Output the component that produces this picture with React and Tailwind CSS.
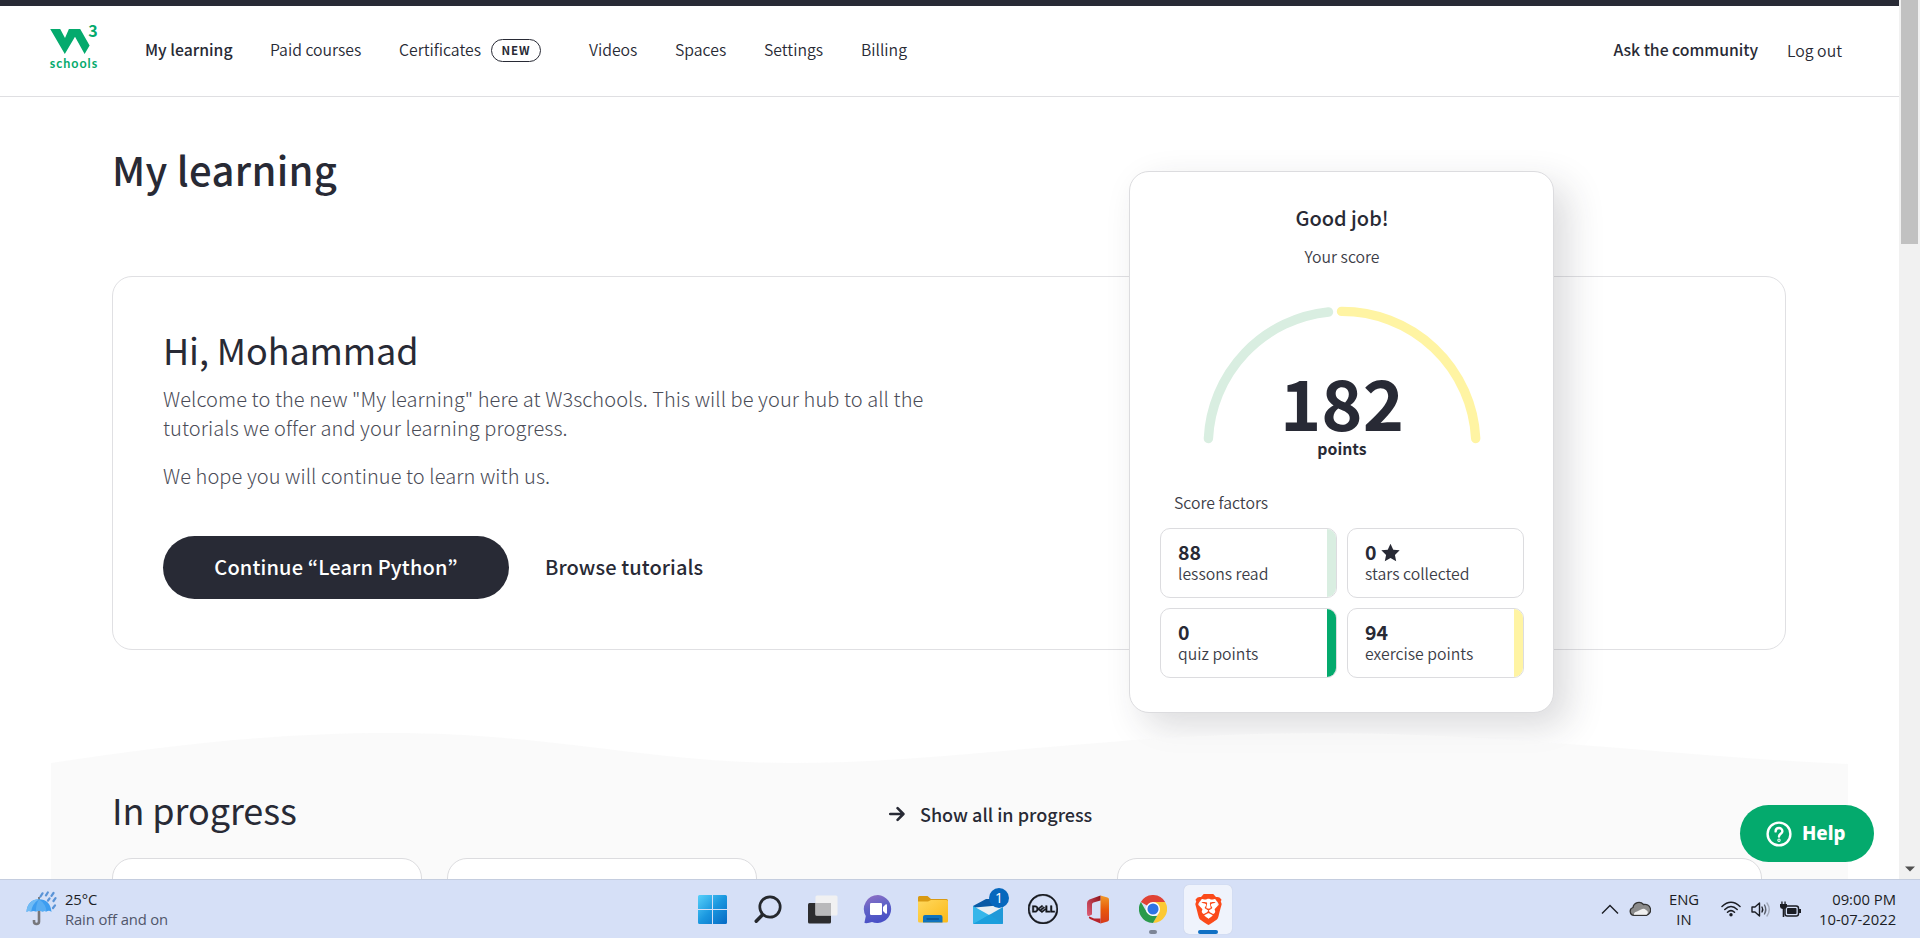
import React from "react";
import { SiBrave, SiDell } from "react-icons/si";

const sans = "font-['Noto_Sans_CJK_KR',sans-serif]";
const system = "font-['Open_Sans',sans-serif]";

function Logo() {
  return (
    <svg width="50" height="46" viewBox="50 24 50 46" className="shrink-0 overflow-visible">
      <path d="M50.2 29H60.2L65 38L68.9 29H80.2L89.6 45.5L84.6 54L75 36.8L64.8 54Z" fill="#04aa6d" />
      <text x="88.2" y="37" fontSize="16" fontWeight="700" fontFamily="Noto Sans CJK KR, sans-serif" fill="#04aa6d">3</text>
      <text x="49.7" y="67.7" fontSize="12.5" fontWeight="700" textLength="47.500" lengthAdjust="spacing" fontFamily="Lato, sans-serif" fill="#04aa6d">schools</text>
    </svg>
  );
}

function Header() {
  return (
    <header className="h-[97px] shrink-0 border-t-[6px] border-b border-t-[#282a35] border-b-[#dfdfe2] flex items-start text-[15.8px] leading-[24px] text-[#282a35] pl-[50px] pr-[57px]">
      <div className="pt-[18px]"><Logo /></div>
      <nav className="flex pt-[32px] pl-[45px] whitespace-nowrap font-[350]">
        <a className="font-medium w-[125px]">My learning</a>
        <a className="w-[129px]">Paid courses</a>
        <a className="w-[190px] flex">
          <span className="w-[92px]">Certificates</span>
          <span className="mt-[1px] h-[23px] w-[50px] rounded-full border-[1.5px] border-[#282a35] text-[11.5px] leading-[20px] font-bold tracking-[1px] text-center">NEW</span>
        </a>
        <a className="w-[86px]">Videos</a>
        <a className="w-[89px]">Spaces</a>
        <a className="w-[97px]">Settings</a>
        <a>Billing</a>
      </nav>
      <div className="ml-auto flex pt-[32px] whitespace-nowrap font-[350]">
        <a className="font-medium mr-[29px] tracking-[-0.04px]">Ask the community</a>
        <a className="pt-[1px]">Log out</a>
      </div>
    </header>
  );
}

function Factor({ value, label, stripe, star }) {
  return (
    <div className="h-[70px] rounded-[10px] border border-[#dcdcdf] overflow-hidden flex justify-between">
      <div className="pt-[12px] pl-[17px] whitespace-nowrap">
        <div className="text-[19.5px] leading-[22px] font-bold flex items-center">
          {value}
          {star && (
            <svg width="19" height="19" viewBox="0 0 24 24" className="ml-[4px]" fill="#282a35">
              <path d="M12 0.8L15.5 8.4L23.6 9.3L17.6 15L19.2 23.2L12 19.1L4.8 23.2L6.4 15L0.4 9.3L8.5 8.4Z" />
            </svg>
          )}
        </div>
        <div className="text-[15.8px] leading-[22px] font-[350] text-[#3c3d47]">{label}</div>
      </div>
      {stripe && <div className={"w-[10px] -my-px -mr-px " + stripe} />}
    </div>
  );
}

function ScoreCard() {
  return (
    <aside className="absolute left-[1016px] top-[-106px] w-[425px] h-[542px] rounded-[20px] border border-[#dcdcdf] bg-white shadow-[14px_14px_36px_rgba(40,42,53,0.17)] pl-[30px] pr-[29px] pt-[32px] text-center text-[#282a35]">
      <h3 className="text-[20px] leading-[28px] font-medium">Good job!</h3>
      <p className="mt-[13px] text-[15.8px] leading-[24px] font-[350] text-[#3c3d47]">Your score</p>
      <div className="relative h-[222px]">
        <svg width="290" height="150" viewBox="1196.5 300 290 150" className="absolute left-[36.500px] top-[31px]" fill="none" strokeWidth="9.4" strokeLinecap="round">
          <path d="M1207.9 438.5A133.8 133.8 0 0 1 1328 312" stroke="#d9eee1" />
          <path d="M1341 311.4A133.8 133.8 0 0 1 1475.2 438.5" stroke="#fff4a3" />
        </svg>
        <div className="absolute inset-x-0 top-[97px] text-[70px] leading-[70px] font-semibold">182</div>
        <div className="absolute inset-x-0 top-[168px] text-[15.800px] leading-[24px] font-bold">points</div>
      </div>
      <div className="text-left">
        <p className="pl-[14px] text-[15.8px] leading-[24px] font-[350] text-[#3c3d47]">Score factors</p>
        <div className="mt-[13px] grid grid-cols-2 gap-x-[10px] gap-y-[10px]">
          <Factor value="88" label="lessons read" stripe="bg-[#d9eee1]" />
          <Factor value="0" label="stars collected" star />
          <Factor value="0" label="quiz points" stripe="bg-[#04aa6d]" />
          <Factor value="94" label="exercise points" stripe="bg-[#fff4a3]" />
        </div>
      </div>
    </aside>
  );
}

function Welcome() {
  return (
    <section className="relative mt-[79px] ml-[112px] w-[1674px] h-[374px] shrink-0 rounded-[20px] border border-[#e0e0e3] pl-[50px] pt-[48px] text-[#282a35]">
      <h2 className="text-[36px] leading-[48px] whitespace-nowrap tracking-[-0.100px]">Hi, Mohammad</h2>
      <p className="mt-[11px] text-[20px] leading-[29px] font-light tracking-[0.08px] whitespace-nowrap text-[#4a4c57]">
        Welcome to the new "My learning" here at W3schools. This will be your hub to all the
        <br />
        tutorials we offer and your learning progress.
      </p>
      <p className="mt-[19px] text-[20px] leading-[29px] font-light tracking-[0.08px] whitespace-nowrap text-[#4a4c57]">We hope you will continue to learn with us.</p>
      <div className="mt-[46px] flex items-center text-[20px] leading-[28px] font-medium whitespace-nowrap">
        <button className="h-[63px] w-[346px] rounded-full bg-[#282a35] pb-[1px] tracking-[0.150px] text-white">Continue “Learn Python”</button>
        <a className="ml-[36px] pb-[1px] tracking-[0.100px]">Browse tutorials</a>
      </div>
      <ScoreCard />
    </section>
  );
}

function Progress() {
  return (
    <section className="relative mt-[83px] ml-[51px] w-[1797px] flex-1 flex flex-col text-[#282a35]">
      <svg width="1797" height="32" viewBox="0 0 1797 32" className="block shrink-0" preserveAspectRatio="none">
        <path d="M0 30C120 12 220 0 340 0C500 0 600 30 740 30C900 30 1060 0 1270 0C1460 0 1640 25 1797 31V32H0Z" fill="#f8f8f8" fillOpacity="0.700" />
      </svg>
      <div className="flex-1 bg-[#f8f8f8]/70 pl-[61px] pt-[20px]">
        <div className="flex h-[48px] items-center">
          <h2 className="w-[777px] text-[36px] leading-[48px] tracking-[-0.100px]">In progress</h2>
          <a className="flex items-center pt-[10px] text-[18px] leading-[26px] font-medium whitespace-nowrap">
            <svg width="16" height="16" viewBox="0 0 16 16" className="mr-[15px]" fill="none" stroke="#282a35" strokeWidth="2.6" strokeLinecap="round" strokeLinejoin="round">
              <path d="M1.2 8H14.2M8.6 2.2L14.4 8L8.6 13.8" />
            </svg>
            Show all in progress
          </a>
        </div>
        <div className="mt-[25px] flex">
          <div className="h-[60px] w-[310px] rounded-t-[20px] border border-[#dcdcdf] bg-white" />
          <div className="ml-[25px] h-[60px] w-[310px] rounded-t-[20px] border border-[#dcdcdf] bg-white" />
          <div className="ml-[360px] h-[60px] w-[645px] rounded-t-[20px] border border-[#dcdcdf] bg-white" />
        </div>
      </div>
      <button className="absolute left-[1689px] top-[72px] flex h-[57px] w-[134px] items-center rounded-full bg-[#04aa6d] pl-[26px] text-[18.800px] font-extrabold text-white font-['Noto_Sans',sans-serif]">
        <svg width="26" height="26" viewBox="0 0 26 26" fill="none" stroke="white" strokeWidth="2.4" strokeLinecap="round">
          <circle cx="13" cy="13" r="11.4" />
          <path d="M9.6 10.4C9.6 5.9 16.4 6 16.4 10.2C16.4 12.8 13 12.8 13 15.6" />
          <circle cx="13" cy="19.2" r="0.5" />
        </svg>
        <span className="ml-[10px]">Help</span>
      </button>
    </section>
  );
}

function Umbrella() {
  return (
    <svg width="31" height="36" viewBox="0 0 31 36">
      <path d="M13 19V30.5Q13 33 10.5 33T8 30.5V29" fill="none" stroke="#77777c" strokeWidth="2.6" />
      <path d="M13 6V9" stroke="#666" strokeWidth="1.6" />
      <path d="M0.5 21C1 12.500 6 8.300 13 8.300S25 12.500 25.500 21Q23 18.800 20.500 20.600Q18.500 19.400 16.500 20.600Q13 19 9.800 20.600Q7.500 19.200 5.200 20.600Q2.600 19 0.500 21Z" fill="#3d9df0" />
      <path d="M0.500 21C1 12.500 6 8.300 13 8.300Q6 13 5.200 20.600Q2.600 19 0.500 21Z" fill="#70bbf5" />
      <path d="M13 8.300Q20 13 20.500 20.600Q18.500 19.400 16.500 20.600Q13 19 9.800 20.600Q10 13 13 8.300Z" fill="#58adf3" />
      <path d="M14.500 5.500L16.500 2.300M20 4.300L21.800 1.500M25.500 4.800L27.500 2M22 9.500L23.500 7.500M27.500 10L29.500 7.200M27 17L29 14.300" stroke="#5a93d6" strokeWidth="2.200" strokeLinecap="round" />
    </svg>
  );
}

function WindowsIcon() {
  return (
    <svg width="29" height="29" viewBox="0 0 29 29">
      <defs>
        <linearGradient id="win" x1="0" y1="0" x2="1" y2="1" gradientUnits="objectBoundingBox">
          <stop offset="0" stopColor="#57d0fa" />
          <stop offset="0.5" stopColor="#1a97df" />
          <stop offset="1" stopColor="#0569c4" />
        </linearGradient>
      </defs>
      <path d="M1.500 0H14V14H0V1.500Q0 0 1.500 0ZM15 0H27.500Q29 0 29 1.500V14H15ZM0 15H14V29H1.500Q0 29 0 27.500ZM15 15H29V27.500Q29 29 27.500 29H15Z" fill="url(#win)" />
    </svg>
  );
}

function SearchIcon() {
  return (
    <svg width="28" height="29" viewBox="0 0 28 29" fill="none" stroke="#25282d" strokeLinecap="round">
      <circle cx="16" cy="12" r="10.200" strokeWidth="2.700" />
      <path d="M8.300 20L2.200 26.300" strokeWidth="3.400" />
    </svg>
  );
}

function TaskViewIcon() {
  return (
    <svg width="30" height="29" viewBox="0 0 30 29">
      <rect x="0" y="8" width="23" height="20.500" rx="1.500" fill="#2d2d2f" />
      <rect x="7.500" y="0.500" width="22" height="20" rx="1.500" fill="#f1f1f2" />
      <rect x="7.500" y="8" width="15.500" height="12.500" fill="#b9b9bb" />
    </svg>
  );
}

function ChatIcon() {
  return (
    <svg width="30" height="30" viewBox="0 0 30 30">
      <defs>
        <linearGradient id="chat" x1="0" y1="0" x2="0.300" y2="1">
          <stop offset="0" stopColor="#9571c4" />
          <stop offset="0.500" stopColor="#6163c7" />
          <stop offset="1" stopColor="#4950c6" />
        </linearGradient>
      </defs>
      <path d="M15 1A14 14 0 1 1 9 28Q5 29.500 1.800 29Q1.200 28.500 1.700 27.500L2.800 22A14 14 0 0 1 15 1Z" fill="url(#chat)" />
      <rect x="7" y="9" width="12" height="12" rx="1.300" fill="white" />
      <path d="M20 13L22.500 10.500Q24 9.500 24 11.500V18.500Q24 20.500 22.500 19.500L20 17Z" fill="white" />
    </svg>
  );
}

function FolderIcon() {
  return (
    <svg width="30" height="27" viewBox="0 0 30 27">
      <defs>
        <linearGradient id="folder" x1="0" y1="0" x2="1" y2="1">
          <stop offset="0" stopColor="#ffd85e" />
          <stop offset="1" stopColor="#fbb917" />
        </linearGradient>
      </defs>
      <path d="M0 1.500Q0 0 1.500 0H9.500L13 3H28.500Q30 3 30 4.500V8H0Z" fill="#d99a13" />
      <path d="M0 5.500H10L13 4H28.500Q30 4 30 5.500V25Q30 26.500 28.500 26.500H1.500Q0 26.500 0 25Z" fill="url(#folder)" />
      <path d="M5 26.500V21Q5 19 7 19H22.500Q24.500 19 24.500 21V26.500Z" fill="#0f73bd" />
      <path d="M9 23H20.500" stroke="#0a4f8c" strokeWidth="1.300" strokeLinecap="round" />
    </svg>
  );
}

function MailIcon() {
  return (
    <div className="relative h-[26px] w-[30px] mt-[3px]">
      <svg width="30" height="26" viewBox="0 0 30 26">
        <path d="M0 8L13 1H30V14H0Z" fill="#0a5aa5" />
        <path d="M2 9.500L30 7V14L15 20Z" fill="#e9eef3" />
        <path d="M0 8L17 17.500L30 26H0.800Q0 26 0 25Z" fill="#35b6ea" />
        <path d="M30 9V25Q30 26 29 26H1L17 16.500Z" fill="#2099d8" />
        <path d="M0 26L17 16.500L30 26Z" fill="#1b9fdd" />
      </svg>
      <span className="absolute left-[16px] top-[-10px] h-[20px] w-[20px] rounded-full bg-[#0667bd] text-center text-[14px] leading-[20px] text-white">1</span>
    </div>
  );
}

function OfficeIcon() {
  return (
    <svg width="24" height="29" viewBox="0 0 24 29">
      <defs>
        <linearGradient id="offR" x1="0" y1="0" x2="0" y2="1">
          <stop offset="0" stopColor="#f09a2a" />
          <stop offset="0.500" stopColor="#e8590c" />
          <stop offset="1" stopColor="#d63a1c" />
        </linearGradient>
        <linearGradient id="offL" x1="1" y1="0" x2="0" y2="1">
          <stop offset="0" stopColor="#8e1218" />
          <stop offset="1" stopColor="#e0607a" />
        </linearGradient>
      </defs>
      <path d="M14.500 0.500L21.500 2.500Q23 3 23 4.500V24.500Q23 26 21.500 26.500L14.500 28.500Z" fill="url(#offR)" />
      <path d="M14.500 0.500L3.500 4.500Q1 5.500 1 8V18.500Q1 22 3.500 20.800L6 19.500V9.500Q6 8 7.500 7.500L14.500 5.500Z" fill="url(#offL)" />
      <path d="M3.500 21.500L8 23.500H14.500V28.500L4 24Q2 22.500 3.500 21.500Z" fill="#b8242b" />
    </svg>
  );
}

function ChromeIcon() {
  return (
    <svg width="28" height="28" viewBox="0 0 48 48">
      <path d="M24 24L3.200 12A24 24 0 0 1 44.800 12Z" fill="#e04335" />
      <path d="M24 12H44.800A24 24 0 0 1 24 48L34.400 30Z" fill="#fcc934" />
      <path d="M3.200 12L13.600 30L24 36H31L24 48A24 24 0 0 1 3.200 12Z" fill="#2a9a4b" />
      <circle cx="24" cy="24" r="12" fill="white" />
      <circle cx="24" cy="24" r="9.500" fill="#2f74e4" />
    </svg>
  );
}

function BraveIcon() {
  return (
    <div className="relative">
      <svg width="31" height="31" viewBox="0 0 31 31" className="absolute inset-0">
        <path d="M8 5H23L25 18L15.500 27L6 18Z" fill="white" />
      </svg>
      <SiBrave size={31} color="#fb4a1a" className="relative" />
    </div>
  );
}

function Slot({ children, active, dot }) {
  return (
    <div className="flex h-full w-[55.100px] items-center justify-center">
      <div className={"relative flex h-[49px] w-[48px] items-center justify-center rounded-[5px] " + (active ? "bg-[#eff3fc] shadow-[0_0_1px_#b4bed4]" : "")}>
        {children}
        {active && <span className="absolute bottom-0 left-[14px] h-[4px] w-[20px] rounded-full bg-[#0f70c4]" />}
        {dot && <span className="absolute bottom-0 left-[20px] h-[4px] w-[8px] rounded-full bg-[#7c8596]" />}
      </div>
    </div>
  );
}

function Tray() {
  return (
    <div className="flex items-center justify-end pr-[24px] text-[14.800px] leading-[20px] text-[#1b1d24]">
      <svg width="18" height="12" viewBox="0 0 18 12" fill="none" stroke="#1b1d24" strokeWidth="1.400">
        <path d="M1 10.500L9 2.500L17 10.500" />
      </svg>
      <svg width="22" height="18" viewBox="0 0 22 18" className="ml-[10px]">
        <path d="M5 15.300A4 4 0 0 1 4 7.500A6 6 0 0 1 14.500 4.500A5 5 0 0 1 17.500 15.300Z" fill="#8b8b8b" stroke="#333" strokeWidth="1.300" />
        <path d="M5 14.700Q4.500 12.500 8 11.500L12 9.500Q15 8 17 10Q20.500 12 17.500 14.700Z" fill="#f0f0f0" />
      </svg>
      <div className="ml-[17px] w-[32px] text-center">ENG<br />IN</div>
      <svg width="20" height="16" viewBox="0 0 20 16" className="ml-[21px]" fill="none" stroke="#1b1d24" strokeWidth="1.500" strokeLinecap="round">
        <path d="M1 5.500Q10 -3 19 5.500M3.800 8.500Q10 2.500 16.200 8.500M6.500 11.300Q10 8 13.500 11.300" />
        <circle cx="10" cy="13.700" r="1.700" fill="#1b1d24" stroke="none" />
      </svg>
      <svg width="21" height="17" viewBox="0 0 21 17" className="ml-[10px]" fill="none" stroke="#1b1d24" strokeWidth="1.400" strokeLinecap="round" strokeLinejoin="round">
        <path d="M1 6H4L8.500 2V15L4 11H1Z" />
        <path d="M11 6Q12.500 8.500 11 11" />
        <path d="M13.500 4Q16 8.500 13.500 13" stroke="#5b606d" />
        <path d="M16 2Q20.500 8.500 16 15" stroke="#a3aabb" />
      </svg>
      <svg width="22" height="17" viewBox="0 0 22 17" className="ml-[8px]">
        <rect x="5" y="5" width="13.500" height="10" rx="2.300" fill="none" stroke="#1b1d24" strokeWidth="1.500" />
        <rect x="7" y="7" width="9.500" height="6" rx="0.800" fill="#1b1d24" />
        <path d="M19 8H21V12H19Z" fill="#1b1d24" />
        <path d="M0 3H1.300V0.500H2.600V3H4.400V0.500H5.700V3H7V5.500Q7 7.500 4.300 8V16H2.700V8Q0 7.500 0 5.500Z" fill="#1b1d24" />
      </svg>
      <div className="ml-[17px] w-[77px] text-right whitespace-nowrap">09:00 PM<br />10-07-2022</div>
    </div>
  );
}

function Taskbar() {
  return (
    <footer className={"grid h-[59px] shrink-0 grid-cols-[685px_551px_1fr] border-t border-[#c4cddf] bg-[#d6e0f7] " + system}>
      <div className="flex items-center pl-[26px] text-[14.800px] leading-[20px]">
        <Umbrella />
        <div className="ml-[8px] whitespace-nowrap tracking-[-0.120px]">
          <div className="text-[#1b1d24]">25°C</div>
          <div className="text-[#50566a]">Rain off and on</div>
        </div>
      </div>
      <div className="flex items-center">
        <Slot><WindowsIcon /></Slot>
        <Slot><SearchIcon /></Slot>
        <Slot><TaskViewIcon /></Slot>
        <Slot><ChatIcon /></Slot>
        <Slot><FolderIcon /></Slot>
        <Slot><MailIcon /></Slot>
        <Slot><SiDell size={30} color="#14161c" className="stroke-[#14161c] stroke-[0.4]" /></Slot>
        <Slot><OfficeIcon /></Slot>
        <Slot dot><ChromeIcon /></Slot>
        <Slot active><BraveIcon /></Slot>
      </div>
      <Tray />
    </footer>
  );
}

export default function App() {
  return (
    <div className={"flex h-[938px] w-[1920px] flex-col overflow-hidden bg-white " + sans}>
      <div className="flex h-[879px] shrink-0 overflow-hidden">
        <div className="flex h-[879px] w-[1899px] flex-col overflow-hidden">
          <Header />
          <h1 className="mt-[44px] ml-[112px] shrink-0 text-[40px] leading-[56px] font-medium tracking-[0.300px] text-[#282a35]">My learning</h1>
          <Welcome />
          <Progress />
        </div>
        <div className="flex w-[21px] flex-col items-center justify-between bg-[#f1f1f1] pb-[7px]">
          <div className="h-[244px] w-[17px] bg-[#c1c1c1]" />
          <svg width="10" height="6" viewBox="0 0 10 6"><path d="M0 0.500H10L5 5.500Z" fill="#505050" /></svg>
        </div>
      </div>
      <Taskbar />
    </div>
  );
}
